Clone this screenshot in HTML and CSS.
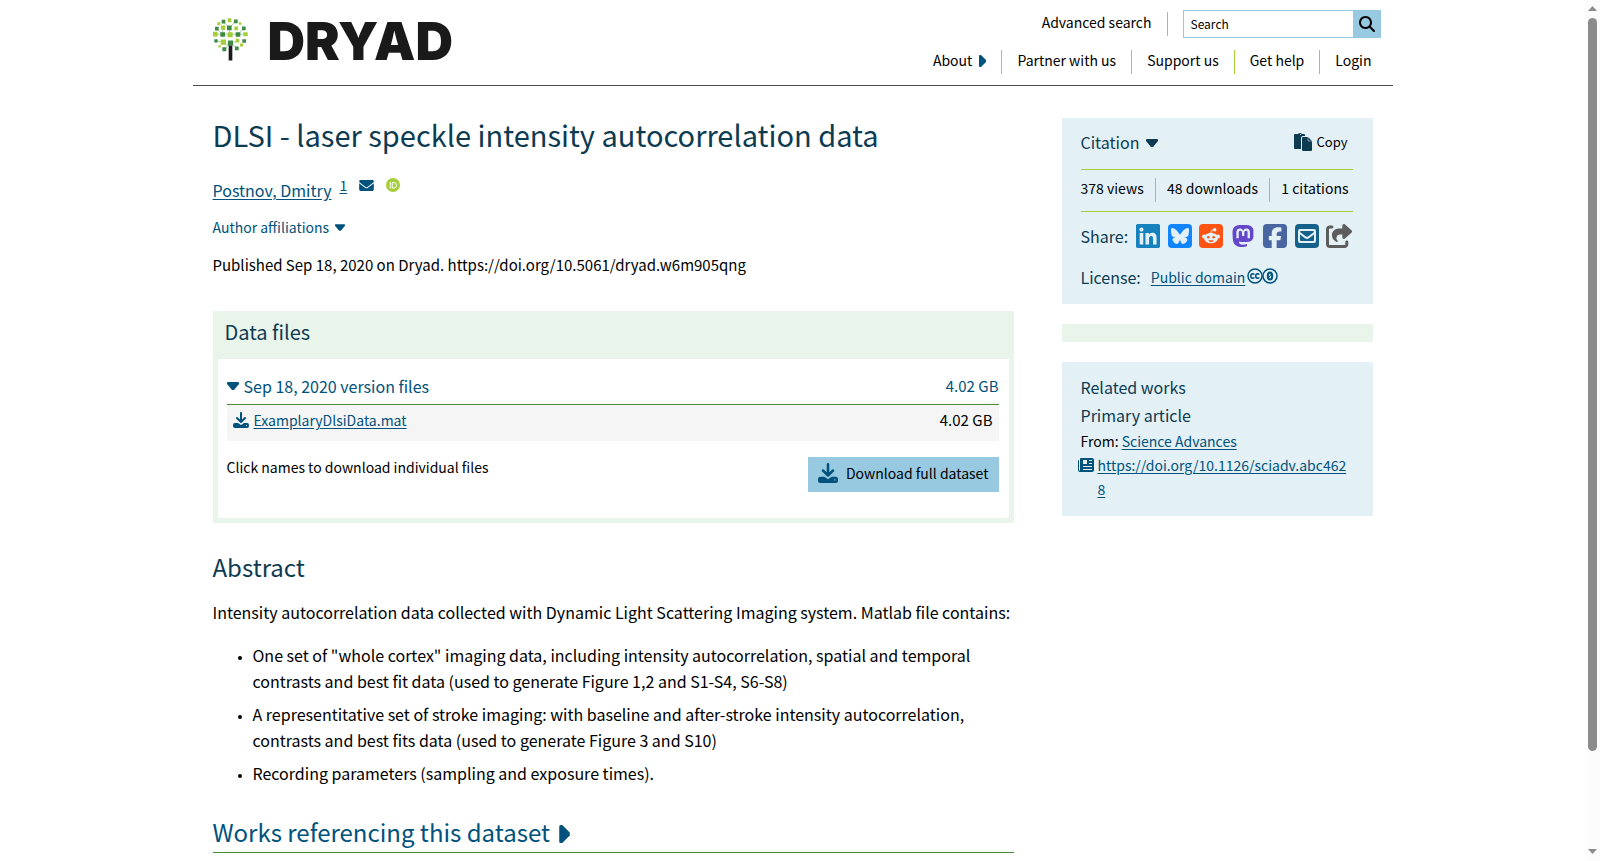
FILE: index.html
```html
<!DOCTYPE html>
<html lang="en">
<head>
  <meta charset="UTF-8">
  <meta name="viewport" content="width=device-width, initial-scale=1.0">
  <title>DLSI - laser speckle intensity autocorrelation data | Dryad</title>
  <link rel="stylesheet" href="styles.css">
</head>
<body>
  <div class="page">
    <header class="site-header">
      <a class="logo" href="#" aria-label="Dryad home">
        <svg class="logo-tree" viewBox="0 0 105 128" aria-hidden="true">
          <path d="M31 10 49 29 68 9M11 31 29 49M92 30 75 49M7 48H97M31 72 9 68M31 72 52 85M73 67 52 80M34 93 52 74 71 90M49 29 51 49M30 28 29 49" stroke="#7fb97f" stroke-width="2" fill="none"/>
          <path fill="#3f8a43" d="M26 5h11v11H26zM63 4h11v11H63zM6 26h11v11H6zM42 22h14v14H42zM87 25h11v11H87zM22 42h14v14H22zM68 42h14v14H68zM4 63h10v10H4zM45 67h15v15H45zM88 63h11v11H88zM28 87h12v12H28zM66 85h11v11H66z"/>
          <path fill="#a6ce39" d="M44 0h11v12H44zM13 12h9v9h-9zM77 12h8v8h-8zM24 22h13v13H24zM64 25h11v11H64zM0 41h14v14H0zM44 42h15v15H44zM91 42h13v12H91zM23 64h16v16H23zM68 62h11v11H68zM16 81h7v7h-7zM81 76h9v9h-9z"/>
          <path fill="#1a1a1a" d="M47 82h11v45H47z"/>
        </svg>
        <span class="logo-name">DRYAD</span>
      </a>
      <div class="header-nav">
        <div class="nav-row">
          <a class="nav-item" href="#">Advanced search</a>
          <form class="search">
            <input type="text" placeholder="Search" aria-label="Search">
            <button type="button" aria-label="Submit search">
              <svg viewBox="0 0 512 512"><path d="M416 208c0 45.9-14.9 88.3-40 122.7L502.6 457.4c12.5 12.5 12.5 32.8 0 45.3s-32.8 12.5-45.3 0L330.7 376c-34.4 25.2-76.8 40-122.7 40C93.1 416 0 322.9 0 208S93.1 0 208 0S416 93.1 416 208zM208 352a144 144 0 1 0 0-288 144 144 0 1 0 0 288z"/></svg>
            </button>
          </form>
        </div>
        <nav class="nav-row">
          <button class="nav-item about">About
            <svg class="caret-right" viewBox="0 0 7 12"><path d="M0 1q0-1 1-1h1l5 5v2l-5 5H1q-1 0-1-1z"/></svg>
          </button>
          <a class="nav-item" href="#">Partner with us</a>
          <a class="nav-item" href="#">Support us</a>
          <a class="nav-item" href="#">Get help</a>
          <a class="nav-item" href="#">Login</a>
        </nav>
      </div>
    </header>

    <div class="columns">
      <main class="dataset">
        <h1>DLSI - laser speckle intensity autocorrelation data</h1>
        <p class="authors">
          <a href="#">Postnov, Dmitry</a>
          <span class="author-marks">
            <a href="#">1</a>
            <a href="#" aria-label="Email author"><svg class="mail" viewBox="0 64 512 384"><path d="M48 64C21.500 64 0 85.500 0 112c0 15.100 7.100 29.300 19.200 38.400L236.800 313.600c11.400 8.500 27 8.500 38.400 0L492.800 150.400c12.100-9.100 19.200-23.300 19.200-38.400c0-26.500-21.500-48-48-48H48zM0 176V384c0 35.300 28.700 64 64 64H448c35.300 0 64-28.700 64-64V176L294.400 339.200c-22.800 17.100-54 17.100-76.800 0L0 176z"/></svg></a>
            <a href="#" aria-label="ORCID"><svg class="orcid" viewBox="0 0 28 28"><circle cx="14" cy="14" r="14" fill="#a6ce39"/><path d="M8.500 8v13M12.500 9h3.500a5 5.500 0 0 1 0 11h-3.500z" fill="none" stroke="#fff" stroke-width="2"/></svg></a>
          </span>
        </p>
        <button class="affiliations">Author affiliations
          <svg class="caret-down small" viewBox="0 0 12 8"><path d="M1 0h10q1 0 1 1v1L7 8H5L0 2V1q0-1 1-1z"/></svg>
        </button>
        <p class="published">Published Sep 18, 2020 on Dryad. https://doi.org/10.5061/dryad.w6m905qng</p>

        <section class="files">
          <h2>Data files</h2>
          <div class="files-body">
            <button class="version">
              <svg class="caret-down" viewBox="0 0 12 8"><path d="M1 0h10q1 0 1 1v1L7 8H5L0 2V1q0-1 1-1z"/></svg>
              <span class="version-name">Sep 18, 2020 version files</span>
              <span class="size">4.02 GB</span>
            </button>
            <div class="file-row">
              <a href="#">
                <svg class="download" viewBox="0 0 16 16"><path d="M8 1v8M4 6l4 4 4-4" fill="none" stroke="currentColor" stroke-width="2" stroke-linecap="round" stroke-linejoin="round"/><path d="M2 11h3l3 2 3-2h3q2 0 2 2v1q0 2-2 2H2q-2 0-2-2v-1q0-2 2-2zM13 13v1h1v-1z" fill-rule="evenodd"/></svg>
                <span class="file-name">ExamplaryDlsiData.mat</span>
              </a>
              <span class="size">4.02 GB</span>
            </div>
            <div class="files-footer">
              <span class="hint">Click names to download individual files</span>
              <button class="download-all">
                <svg viewBox="0 0 16 16"><path d="M8 1v8M4 6l4 4 4-4" fill="none" stroke="currentColor" stroke-width="2" stroke-linecap="round" stroke-linejoin="round"/><path d="M2 11h3l3 2 3-2h3q2 0 2 2v1q0 2-2 2H2q-2 0-2-2v-1q0-2 2-2zM13 13v1h1v-1z" fill-rule="evenodd"/></svg>
                <span>Download full dataset</span>
              </button>
            </div>
          </div>
        </section>

        <section class="abstract">
          <h2>Abstract</h2>
          <p>Intensity autocorrelation data collected with Dynamic Light Scattering Imaging system. Matlab file contains:</p>
          <ul>
            <li>One set of "whole cortex" imaging data, including intensity autocorrelation, spatial and temporal contrasts and best fit data (used to generate Figure 1,2 and S1-S4, S6-S8)</li>
            <li>A representitative set of stroke imaging: with baseline and after-stroke intensity autocorrelation, contrasts and best fits data (used to generate Figure 3 and S10)</li>
            <li>Recording parameters (sampling and exposure times).</li>
          </ul>
        </section>

        <h2 class="works">
          <button>Works referencing this dataset
            <svg class="caret-right" viewBox="0 0 7 12"><path d="M0 1q0-1 1-1h1l5 5v2l-5 5H1q-1 0-1-1z"/></svg>
          </button>
        </h2>
      </main>

      <aside class="sidebar">
        <section class="panel">
          <div class="citation">
            <button class="citation-toggle">Citation
              <svg class="caret-down" viewBox="0 0 12 8"><path d="M1 0h10q1 0 1 1v1L7 8H5L0 2V1q0-1 1-1z"/></svg>
            </button>
            <button class="copy">
              <svg viewBox="0 0 18 18"><path d="M2 1h2q1-1 2-1t2 1h2q1 0 1 1v1H9q-2 0-2 2v11H1q-1 0-1-1V2q0-1 1-1zM6 1v1h1V1z" fill-rule="evenodd"/><path d="M9 4h5l4 4v9q0 1-1 1H9q-1 0-1-1V5q0-1 1-1z"/><path d="M14 4v4h4" fill="none" stroke="#e3f0f6" stroke-width=".5"/></svg>
              <span>Copy</span>
            </button>
          </div>
          <div class="metrics">
            <span>378 views</span>
            <span>48 downloads</span>
            <span>1 citations</span>
          </div>
          <div class="share">
            <span class="label">Share:</span>
            <a href="#" aria-label="LinkedIn"><svg viewBox="0 32 448 448" fill="#1582bd"><path d="M416 32H31.900C14.300 32 0 46.500 0 64.300v383.400C0 465.500 14.300 480 31.900 480H416c17.600 0 32-14.500 32-32.300V64.300c0-17.800-14.400-32.300-32-32.300zM135.400 416H69V202.200h66.500V416zm-33.200-243c-21.300 0-38.500-17.300-38.500-38.500S80.900 96 102.200 96c21.200 0 38.500 17.300 38.500 38.500 0 21.300-17.200 38.500-38.500 38.500zm282.100 243h-66.400V312c0-24.800-.5-56.700-34.500-56.700-34.600 0-39.900 27-39.900 54.900V416h-66.400V202.200h63.700v29.200h.9c8.900-16.800 30.600-34.500 62.900-34.500 67.200 0 79.700 44.300 79.700 101.900V416z"/></svg></a>
            <a href="#" aria-label="Bluesky"><svg viewBox="-4 -4 32 32"><rect x="-4" y="-4" width="32" height="32" rx="5" fill="#1185fe"/><path fill="#e3f0f6" d="M12 10.800c-1.087-2.114-4.046-6.053-6.798-7.995C2.566.944 1.561 1.266.902 1.565.139 1.908 0 3.080 0 3.768c0 .69.378 5.650.624 6.479.815 2.736 3.713 3.660 6.383 3.364.136-.02.275-.039.415-.056-.138.022-.276.04-.415.056-3.912.58-7.387 2.005-2.830 7.078 5.013 5.190 6.870-1.113 7.823-4.308.953 3.195 2.050 9.271 7.733 4.308 4.267-4.308 1.172-6.498-2.740-7.078a8.741 8.741 0 0 1-.415-.056c.14.017.279.036.415.056 2.670.297 5.568-.628 6.383-3.364.246-.828.624-5.790.624-6.478 0-.69-.139-1.861-.902-2.206-.659-.298-1.664-.62-4.300 1.240C16.046 4.748 13.087 8.687 12 10.800Z"/></svg></a>
            <a href="#" aria-label="Reddit"><svg viewBox="0 0 24 24"><rect width="24" height="24" rx="4" fill="#ff5414"/><g fill="#e3f0f6"><ellipse cx="12" cy="14" rx="7" ry="5.300"/><circle cx="5" cy="12.500" r="2"/><circle cx="19" cy="12.500" r="2"/><circle cx="15.700" cy="5.700" r="1.700"/></g><path d="M12 9q0-3.500 3-3.500" fill="none" stroke="#e3f0f6"/><circle cx="9.300" cy="13.300" r="1.300" fill="#ff5414"/><circle cx="14.700" cy="13.300" r="1.300" fill="#ff5414"/><path d="M9.300 16.200h5.400q-1 1.900-2.700 1.900t-2.700-1.900z" fill="#ff5414"/></svg></a>
            <a href="#" aria-label="Mastodon"><svg viewBox="-1 0 26 24" fill="#6346c9"><path d="M23.268 5.313c-.35-2.578-2.617-4.610-5.304-5.004C17.510.242 15.792 0 11.813 0h-.03c-3.980 0-4.835.242-5.288.309C3.882.692 1.496 2.518.917 5.127.64 6.412.61 7.837.661 9.143c.074 1.874.088 3.745.26 5.611.118 1.240.325 2.470.62 3.680.55 2.237 2.777 4.098 4.960 4.857 2.336.792 4.849.923 7.256.38.265-.061.527-.132.786-.213.585-.184 1.270-.39 1.774-.753a.057.057 0 0 0 .023-.043v-1.809a.052.052 0 0 0-.02-.041.053.053 0 0 0-.046-.01 20.282 20.282 0 0 1-4.709.545c-2.730 0-3.463-1.284-3.674-1.818a5.593 5.593 0 0 1-.319-1.433.053.053 0 0 1 .066-.054c1.517.363 3.072.546 4.632.546.376 0 .75 0 1.125-.01 1.570-.044 3.224-.124 4.768-.422.038-.008.077-.015.11-.024 2.435-.464 4.753-1.920 4.989-5.604.008-.145.03-1.520.03-1.670.002-.512.167-3.630-.024-5.545zm-3.748 9.195h-2.561V8.290c0-1.309-.55-1.976-1.670-1.976-1.230 0-1.846.79-1.846 2.350v3.403h-2.546V8.663c0-1.560-.617-2.350-1.848-2.350-1.112 0-1.668.668-1.670 1.977v6.218H4.822V8.102c0-1.310.337-2.350 1.011-3.120.696-.77 1.608-1.164 2.740-1.164 1.311 0 2.302.5 2.962 1.498l.638 1.060.638-1.060c.66-.999 1.650-1.498 2.960-1.498 1.130 0 2.043.395 2.740 1.164.675.77 1.012 1.810 1.012 3.120z"/></svg></a>
            <a href="#" aria-label="Facebook"><svg viewBox="0 32 448 448" fill="#4a66a0"><path d="M64 32C28.700 32 0 60.700 0 96V416c0 35.300 28.700 64 64 64h98.200V334.200H109.400V256h52.800V222.300c0-87.100 39.400-127.500 125-127.500c16.200 0 44.200 3.200 55.700 6.400V172c-6-.6-16.500-1-29.600-1c-42 0-58.200 15.900-58.200 57.200V256h83.600l-14.400 78.200H255V480H384c35.300 0 64-28.700 64-64V96c0-35.300-28.700-64-64-64H64z"/></svg></a>
            <a href="#" aria-label="Email"><svg viewBox="0 0 24 24"><rect width="24" height="24" rx="4" fill="#16618a"/><rect x="3" y="5" width="18" height="14" rx="2" fill="#e3f0f6"/><path d="M5 8q0-1 1-1h12q1 0 1 1l-6 4.500q-1 .8-2 0zM5 10.500l5 3.800q2 1.400 4 0l5-3.800V16q0 1-1 1H6q-1 0-1-1z" fill="#16618a"/></svg></a>
            <a href="#" aria-label="More sharing options"><svg class="wide" viewBox="0 0 560 512" fill="#5c5c5c"><path d="M352 224H305.500c-45 0-81.500 36.500-81.500 81.500c0 22.300 10.300 34.300 19.200 40.500c6.800 4.700 12.800 12 12.800 20.300c0 9.800-8 17.800-17.800 17.800h-2.500c-2.400 0-4.800-.4-7.100-1.400C210.800 374.800 128 333.400 128 240c0-79.500 64.500-144 144-144h80V34.700C352 15.500 367.500 0 386.700 0c8.600 0 16.800 3.200 23.200 8.900L548.100 133.300c7.600 6.800 11.900 16.500 11.900 26.700s-4.300 19.900-11.900 26.700l-139 125.100c-5.900 5.300-13.500 8.200-21.400 8.200H384c-17.700 0-32-14.300-32-32V224zM80 96c-8.800 0-16 7.200-16 16V432c0 8.800 7.200 16 16 16H400c8.800 0 16-7.200 16-16V384c0-17.700 14.300-32 32-32s32 14.300 32 32v48c0 44.200-35.800 80-80 80H80c-44.200 0-80-35.800-80-80V112C0 67.800 35.800 32 80 32h48c17.700 0 32 14.300 32 32s-14.300 32-32 32H80z"/></svg></a>
          </div>
          <div class="license">
            <span class="label">License:</span>
            <a href="#"><span class="license-name">Public domain</span>
              <svg viewBox="0 0 31 16" fill="none" stroke="currentColor"><g stroke-width="1.500"><circle cx="8" cy="8" r="7"/><circle cx="23" cy="8" r="7"/><path d="M7.300 6.700q-.6-1-1.600-1-1.900.2-1.900 2.300t1.900 2.300q1 0 1.600-1M12.200 6.700q-.6-1-1.600-1-1.900.2-1.900 2.300t1.900 2.300q1 0 1.600-1"/></g><ellipse cx="23" cy="8" rx="2.200" ry="3.500" stroke-width="2"/><path d="m21.800 9.700 2.400-3.600"/></svg>
            </a>
          </div>
        </section>
        <div class="notice"></div>
        <section class="panel related">
          <h2>Related works</h2>
          <h3>Primary article</h3>
          <p>From: <a href="#">Science Advances</a></p>
          <p class="doi"><svg viewBox="0 0 16 14"><path d="M4 0h10q2 0 2 2v10q0 2-2 2H2q-2 0-2-2V3q0-1 1-1v10q1 1 1 0V1q0-1 1-1zM5 2v4h4V2zM11 2v1h3V2zM11 5v1h3V5zM5 8v1h9V8zM5 11v1h9v-1z" fill-rule="evenodd"/></svg><a href="#">https://doi.org/10.1126/sciadv.abc4628</a></p>
        </section>
      </aside>
    </div>
  </div>

  <div class="scrollbar" aria-hidden="true">
    <svg viewBox="0 0 9 5"><path d="M0 5 4.500 0 9 5z"/></svg>
    <div class="track"><div class="thumb"></div></div>
    <svg viewBox="0 0 9 5"><path d="M0 0h9L4.500 5z"/></svg>
  </div>
</body>
</html>
```
FILE: styles.css
```css
* {
  box-sizing: border-box;
}
html, body {
  margin: 0;
  height: 100%;
  overflow: hidden;
}
body {
  padding-right: 15px;
  font-family: "Noto Sans CJK SC", "Open Sans", sans-serif;
  font-size: 14px;
  line-height: 24px;
  color: #000;
  background: #fff;
}
h1, h2, h3 {
  margin: 0;
  font-weight: 400;
  color: #0d3b52;
}
p {
  margin: 0;
}
a {
  color: #00527c;
  text-underline-offset: 2px;
}
button {
  padding: 0;
  border: 0;
  background: none;
  color: inherit;
  font: inherit;
  text-align: left;
  cursor: pointer;
}
svg {
  flex: none;
}
svg:not([fill]) {
  fill: currentColor;
}
.page {
  max-width: 1200px;
  margin: 0 auto;
}

/* header */
.site-header {
  display: flex;
  justify-content: space-between;
  padding: 10px 12px 11px 20px;
  border-bottom: 1px solid #4a4a4a;
}
.logo {
  display: flex;
  align-items: flex-start;
  gap: 20px;
  padding-top: 8px;
  color: #1a1a1a;
  text-decoration: none;
}
.logo-tree {
  width: 35px;
  height: 43px;
}
.logo-name {
  font-family: Inter, sans-serif;
  font-size: 52px;
  font-weight: 900;
  line-height: 48px;
}
.header-nav {
  display: flex;
  flex-direction: column;
  align-items: flex-end;
  gap: 12px;
}
.nav-row {
  display: flex;
  align-items: center;
}
nav.nav-row {
  padding-right: 9px;
}
.nav-item {
  padding: 0 15px 4px;
  border-right: 1px solid #a6ce39;
  color: #000;
  line-height: 20px;
  text-decoration: none;
}
nav .nav-item:last-child {
  padding-right: 0;
  border: 0;
}
.caret-right {
  width: 7px;
  height: 12px;
  margin-left: 4px;
  vertical-align: -1px;
}
.about svg {
  color: #00527c;
}
.search {
  display: flex;
  width: 198px;
  height: 28px;
  margin-left: 15px;
}
.search input {
  flex: 1;
  min-width: 0;
  padding: 0 7px;
  border: 1px solid #97c9e0;
  border-right: 0;
  font: inherit;
  font-size: 12px;
}
.search input::placeholder {
  color: #000;
}
.search button {
  display: flex;
  align-items: center;
  justify-content: center;
  width: 28px;
  background: #97c9e0;
}
.search svg {
  width: 16px;
  height: 16px;
}

/* columns */
.columns {
  display: flex;
  align-items: flex-start;
  gap: 48px;
  padding: 32px 20px 0;
}
.dataset {
  flex: 1;
  min-width: 0;
}
.sidebar {
  display: flex;
  flex-direction: column;
  flex: 0 0 311px;
  gap: 20px;
}
h1 {
  font-size: 29px;
  line-height: 32px;
}
.authors {
  display: flex;
  gap: 8px;
  margin-top: 28px;
  font-size: 16px;
}
.author-marks {
  display: flex;
  align-items: center;
  align-self: flex-start;
  gap: 12px;
  height: 14px;
  font-size: 14px;
}
.author-marks svg {
  display: block;
}
.mail {
  width: 15px;
  height: 11px;
}
.orcid {
  width: 14px;
  height: 14px;
}
.affiliations {
  display: block;
  margin-top: 13px;
  color: #00527c;
}
.caret-down {
  width: 12px;
  height: 8px;
}
.caret-down.small {
  width: 10px;
  height: 7px;
}
.affiliations svg, .citation-toggle svg {
  margin-left: 3px;
  vertical-align: 2px;
}
.published {
  margin-top: 14px;
  font-size: 15px;
}

/* data files */
.files {
  margin-top: 34px;
  padding: 0 5px 5px;
  background: #e9f4eb;
}
.files h2 {
  padding: 5px 7px 11px;
  font-size: 20px;
  line-height: 32px;
}
.files-body {
  padding: 15px 10px 26px 9px;
  background: #fff;
}
.version {
  display: flex;
  align-items: center;
  gap: 5px;
  width: 100%;
  padding-bottom: 6px;
  border-bottom: 1px solid #4a8b3a;
  color: #00527c;
}
.version-name {
  flex: 1;
  font-size: 16px;
}
.size {
  font-size: 15px;
}
.file-row {
  display: flex;
  justify-content: space-between;
  padding: 3px 6px 9px;
  background: #f5f5f5;
}
.file-row a {
  display: flex;
  align-items: center;
  gap: 5px;
  text-decoration: none;
}
.file-name, .license-name {
  text-decoration: underline;
}
.download {
  width: 16px;
  height: 16px;
}
.files-footer {
  display: flex;
  justify-content: space-between;
  align-items: flex-start;
  padding-top: 16px;
}
.hint {
  line-height: 20px;
}
.download-all {
  display: flex;
  align-items: center;
  gap: 8px;
  padding: 4px 10px 7px;
  background: #97c9e0;
}
.download-all svg {
  width: 20px;
  height: 20px;
  color: #00527c;
}

/* abstract */
.abstract {
  margin-top: 27px;
  font-size: 16px;
  line-height: 26px;
}
.abstract h2, .works {
  font-size: 24px;
  line-height: 34px;
}
.abstract p {
  margin-top: 15px;
}
.abstract ul {
  margin: 17px 0 0;
  padding-left: 40px;
}
.abstract li {
  margin-bottom: 7px;
}
.abstract li::marker {
  font-size: 11px;
}
.works {
  margin-top: 29px;
  padding-bottom: 3px;
  border-bottom: 1px solid #4a8b3a;
}
.works button {
  color: #00527c;
}
.works svg {
  width: 11px;
  height: 18px;
}

/* sidebar */
.panel {
  padding: 12px 20px 15px 19px;
  background: #e3f0f6;
}
.citation {
  display: flex;
  justify-content: space-between;
  padding: 0 5px 15px 0;
  color: #0d3b52;
}
.citation-toggle, .label {
  color: #0d3b52;
  font-size: 16px;
}
.copy {
  display: flex;
  align-items: center;
  gap: 5px;
  font-size: 13px;
}
.copy svg {
  width: 18px;
  height: 18px;
}
.copy span {
  color: #000;
}
.metrics {
  display: flex;
  justify-content: space-between;
  padding: 8px 4px 9px 0;
  border-top: 1px solid #a6ce39;
  border-bottom: 1px solid #a6ce39;
}
.metrics span {
  padding-bottom: 4px;
  line-height: 20px;
}
.metrics span + span {
  padding-left: 11px;
  border-left: 1px solid #a6ce39;
}
.share {
  display: flex;
  align-items: center;
  justify-content: space-between;
  margin-top: 12px;
}
.share svg {
  display: block;
  width: 24px;
  height: 24px;
}
.share .wide {
  width: 26px;
}
.license {
  display: flex;
  gap: 10px;
  margin-top: 17px;
}
.license a {
  display: flex;
  gap: 2px;
  text-decoration: none;
}
.license svg {
  width: 31px;
  height: 16px;
  margin-top: 3px;
}
.notice {
  height: 18px;
  background: #e9f4eb;
}
.related {
  padding-top: 11px;
}
.related h2, .related h3 {
  font-size: 16px;
  line-height: 28px;
}
.doi {
  display: flex;
  gap: 4px;
}
.doi svg {
  width: 16px;
  height: 14px;
  margin: 5px 0 0 -3px;
  color: #00527c;
}
.doi a {
  min-width: 0;
  overflow-wrap: anywhere;
}

/* scrollbar */
.scrollbar {
  position: fixed;
  top: 0;
  right: 0;
  bottom: 0;
  display: flex;
  flex-direction: column;
  align-items: center;
  gap: 7px;
  width: 15px;
  padding: 6px 0 7px;
  background: #fcfcfc;
  color: #8b8b8b;
}
.scrollbar svg {
  width: 9px;
  height: 5px;
}
.track {
  flex: 1;
}
.thumb {
  width: 9px;
  height: 89%;
  border-radius: 5px;
  background: #8b8b8b;
}
```
